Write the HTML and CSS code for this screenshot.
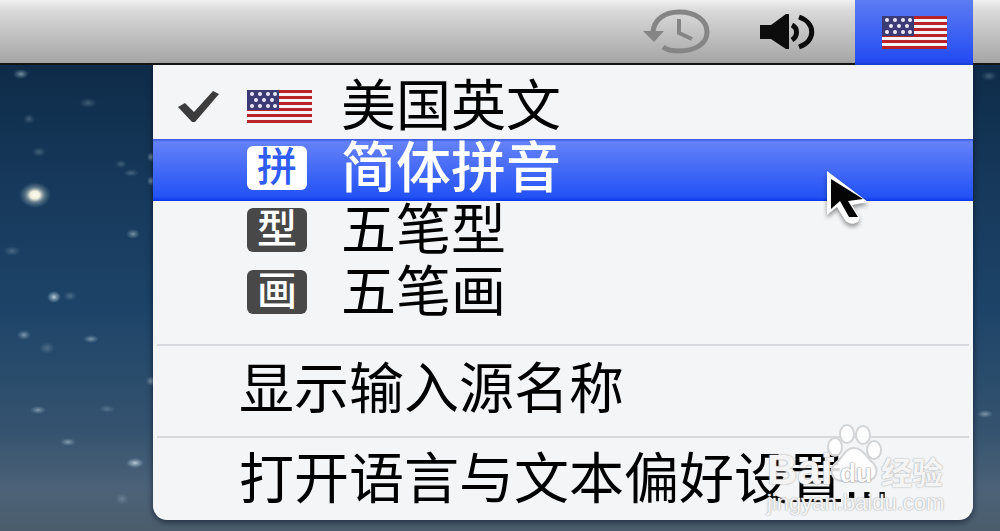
FILE: index.html
```html
<!DOCTYPE html>
<html lang="zh-CN">
<head>
<meta charset="utf-8">
<title>输入源</title>
<link rel="stylesheet" href="styles.css">
</head>
<body>
<svg class="defs" width="0" height="0" aria-hidden="true">
  <defs>
    <symbol id="flag" viewBox="0 0 65 33" preserveAspectRatio="none">
      <rect width="65" height="33" fill="#f6f3f6"/>
      <path d="M0 1.5H65M0 7.5H65M0 13.5H65M0 19.5H65M0 25.5H65M0 31.5H65" stroke="#b9242b" stroke-width="3"/>
      <rect width="32" height="20" fill="#3b3a74"/>
      <g fill="#eceaf5">
        <circle cx="5" cy="4" r="2"/><circle cx="13" cy="4" r="2"/><circle cx="21" cy="4" r="2"/><circle cx="28" cy="4" r="2"/>
        <circle cx="9" cy="10" r="2"/><circle cx="17" cy="10" r="2"/><circle cx="25" cy="10" r="2"/>
        <circle cx="5" cy="16" r="2"/><circle cx="13" cy="16" r="2"/><circle cx="21" cy="16" r="2"/><circle cx="28" cy="16" r="2"/>
      </g>
    </symbol>
    <radialGradient id="glow">
      <stop offset="0" stop-color="#fffdf0"/>
      <stop offset=".3" stop-color="#f1eede"/>
      <stop offset=".6" stop-color="#9fb0b0" stop-opacity=".5"/>
      <stop offset="1" stop-color="#6f8fa0" stop-opacity="0"/>
    </radialGradient>
    <radialGradient id="star">
      <stop offset="0" stop-color="#b9cbd6"/>
      <stop offset="1" stop-color="#8fb0c4" stop-opacity="0"/>
    </radialGradient>
  </defs>
</svg>

<svg class="stars" width="1000" height="531" aria-hidden="true">
  <ellipse cx="35" cy="195" rx="16" ry="13" fill="url(#glow)"/>
  <g fill="url(#star)">
    <ellipse cx="54" cy="297" rx="7" ry="6"/>
    <ellipse cx="135" cy="463" rx="9" ry="5"/>
    <g opacity=".6">
      <ellipse cx="21" cy="74" rx="8" ry="5"/><ellipse cx="133" cy="234" rx="7" ry="5"/>
      <ellipse cx="91" cy="339" rx="8" ry="4"/><ellipse cx="38" cy="410" rx="8" ry="4"/>
      <ellipse cx="68" cy="442" rx="8" ry="4"/><ellipse cx="24" cy="335" rx="7" ry="5"/>
      <ellipse cx="151" cy="157" rx="4" ry="5"/><ellipse cx="151" cy="181" rx="4" ry="5"/>
      <ellipse cx="151" cy="381" rx="5" ry="5"/><ellipse cx="985" cy="414" rx="8" ry="4"/>
    </g>
    <g opacity=".3">
      <ellipse cx="88" cy="103" rx="9" ry="5"/><ellipse cx="29" cy="119" rx="6" ry="5"/>
      <ellipse cx="39" cy="152" rx="7" ry="5"/><ellipse cx="121" cy="164" rx="6" ry="4"/>
      <ellipse cx="131" cy="173" rx="8" ry="4"/><ellipse cx="12" cy="251" rx="9" ry="5"/>
      <ellipse cx="70" cy="296" rx="7" ry="5"/><ellipse cx="47" cy="348" rx="8" ry="6"/>
      <ellipse cx="107" cy="409" rx="8" ry="4"/><ellipse cx="122" cy="499" rx="7" ry="6"/>
      <ellipse cx="989" cy="76" rx="8" ry="5"/>
    </g>
  </g>
</svg>

<header class="menubar">
  <button class="status" type="button" aria-label="Time Machine">
    <svg width="68" height="48" viewBox="0 0 68 48">
      <g fill="none" stroke="#858585" stroke-width="5">
        <path d="M10 24C11 12 21 4 36 4C52 4 64 12 64 24C64 36 52 43 36 43C30 43 24 42 20 39"/>
        <path d="M36 11V25L49 31" stroke-width="4"/>
      </g>
      <path d="M0 23H21L11 34Z" fill="#858585"/>
    </svg>
  </button>
  <button class="status" type="button" aria-label="音量">
    <svg width="58" height="38" viewBox="0 0 58 38">
      <path d="M1 12H12L27 1H30V36H27L12 26H1Z" fill="#0c0c0c"/>
      <g fill="none" stroke="#0c0c0c" stroke-width="5">
        <path d="M33 12C39 15 39 23 33 27"/>
        <path d="M40 4C57 10 57 28 40 34"/>
      </g>
    </svg>
  </button>
  <button class="status status-open" type="button" aria-label="输入源">
    <svg width="65" height="33"><use href="#flag"/></svg>
  </button>
</header>

<main class="menu">
  <section class="group">
    <button class="item" type="button">
      <span class="mark">
        <svg width="42" height="34" viewBox="0 0 42 34"><path d="M1 18L8 14L17 23L36 2L42 5L18 33H15Z" fill="#3c3c3c"/></svg>
      </span>
      <span class="icon"><svg width="65" height="33"><use href="#flag"/></svg></span>
      <span class="label">美国英文</span>
    </button>
    <button class="item item-active" type="button">
      <span class="mark"></span>
      <span class="icon"><span class="badge">拼</span></span>
      <span class="label">简体拼音</span>
    </button>
    <button class="item" type="button">
      <span class="mark"></span>
      <span class="icon"><span class="badge">型</span></span>
      <span class="label">五笔型</span>
    </button>
    <button class="item" type="button">
      <span class="mark"></span>
      <span class="icon"><span class="badge">画</span></span>
      <span class="label">五笔画</span>
    </button>
  </section>
  <section class="group">
    <button class="item item-plain" type="button">显示输入源名称</button>
  </section>
  <section class="group">
    <button class="item item-plain item-last" type="button">打开语言与文本偏好设置...</button>
  </section>
  <svg class="pointer" width="46" height="58" viewBox="0 0 46 58" aria-hidden="true">
    <path d="M2 0V44L12 36L20 49C25 56 37 52 34 45L27 34L43 31Z" fill="#fff"/>
    <path d="M6 8V38L15 30L24 46H33L23 30L38 28Z" fill="#050505"/>
  </svg>
  <div class="watermark">
    <div class="brand"><span class="bai">Bai</span><span class="du">du</span><span class="jingyan">经验</span></div>
    <svg class="paw" width="56" height="60" viewBox="0 0 56 60" aria-hidden="true">
      <g fill="#fff" fill-opacity=".85" stroke="#d3d4d6" stroke-width="2">
        <ellipse cx="8" cy="23" rx="7" ry="9"/>
        <ellipse cx="20" cy="10" rx="7" ry="9"/>
        <ellipse cx="36" cy="11" rx="7" ry="9"/>
        <ellipse cx="47" cy="26" rx="7" ry="9"/>
        <path d="M27 24C35 24 38 31 43 36C49 41 51 45 49 50C47 57 40 58 27 57C14 58 7 57 5 50C3 44 7 40 12 36C17 31 19 24 27 24Z"/>
      </g>
    </svg>
    <div class="site">jingyan.baidu.com</div>
  </div>
</main>
</body>
</html>
```
FILE: styles.css
```css
* {
  box-sizing: border-box;
}

body {
  margin: 0;
  min-height: 100vh;
  overflow: hidden;
  background: linear-gradient(#0e2c49 65px, #16385a 180px, #1d4468 310px, #35536f 430px, #4c6278 490px, #4b5d6c 531px);
  font-family: "Liberation Sans", "Noto Sans CJK SC", sans-serif;
}

button {
  margin: 0;
  padding: 0;
  border: 0;
  background: none;
  color: inherit;
  font: inherit;
  text-align: left;
}

svg {
  display: block;
}

.defs,
.stars {
  position: absolute;
  top: 0;
  left: 0;
}

.menubar {
  position: relative;
  display: flex;
  justify-content: flex-end;
  height: 65px;
  padding-right: 27px;
  background: linear-gradient(#f0f0f0, #dadada 10px, #a6a6a6 62px);
  border-bottom: 2px solid #151515;
}

.status {
  display: flex;
  align-items: center;
  margin-right: 48px;
}

.status + .status {
  margin-right: 38px;
}

.status.status-open {
  justify-content: center;
  width: 118px;
  height: 65px;
  margin-right: 0;
  background: linear-gradient(#5c7cf2, #2049f2);
}

.menu {
  position: relative;
  margin: 0 27px 0 153px;
  background: #f4f5f7;
  border-radius: 0 0 14px 14px;
  box-shadow: 0 2px 6px rgba(0, 10, 30, 0.6);
}

.group {
  padding: 12px 0 19px;
}

.group:first-child {
  padding-top: 12px;
}

.group + .group {
  padding: 0;
}

.group + .group::before {
  content: "";
  display: block;
  height: 2px;
  margin: 0 4px;
  background: #d8d9dc;
}

.item {
  display: flex;
  align-items: center;
  width: 100%;
  height: 62px;
  padding: 0 0 4px 24px;
  color: #000;
  font-size: 55px;
  line-height: 58px;
  white-space: nowrap;
}

.item-active {
  background: linear-gradient(#3657dc, #6481f8 3px, #2352f5 58px, #0b36e8);
  color: #fff;
  font-weight: 500;
}

.mark {
  width: 70px;
}

.icon {
  width: 94px;
}

.badge {
  display: block;
  width: 60px;
  height: 44px;
  border-radius: 6px;
  background: #484848;
  color: #fff;
  font-size: 40px;
  font-weight: 500;
  line-height: 42px;
  text-align: center;
}

.item-active .badge {
  background: #fff;
  color: #2f5cf2;
}

.item-plain {
  height: 90px;
  padding-left: 86px;
}

.item-last {
  height: 82px;
  padding-bottom: 0;
}

.pointer {
  position: absolute;
  top: 106px;
  right: 102px;
  filter: drop-shadow(0 3px 2px rgba(0, 0, 0, 0.4));
}

.watermark {
  position: absolute;
  right: 26px;
  bottom: 4px;
  width: 180px;
  color: rgba(255, 255, 255, 0.9);
  text-shadow: 0 0 2px #aaa, 0 0 1px #bbb;
}

.paw {
  position: absolute;
  top: -26px;
  left: 60px;
}

.brand {
  display: flex;
  align-items: center;
  height: 40px;
  font-weight: bold;
}

.bai {
  width: 64px;
  font-size: 42px;
}

.du {
  position: relative;
  z-index: 1;
  width: 50px;
  padding: 6px 0 0 9px;
  color: #fff;
  font-size: 26px;
  text-shadow: 0 0 2px #888, 0 0 1px #999;
}

.jingyan {
  font-size: 31px;
}

.site {
  font-size: 22px;
  line-height: 26px;
}
```
